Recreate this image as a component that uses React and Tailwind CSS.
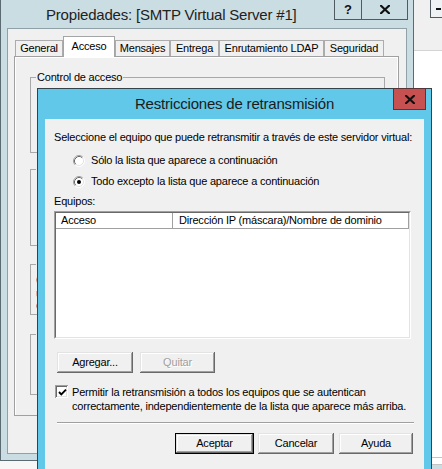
import React from "react";

function CloseGlyph() {
  return (
    <svg width="10" height="9" viewBox="0 0 10 9" className="block">
      <path d="M1 0.8 L9 8.2 M9 0.8 L1 8.2" stroke="#111" strokeWidth="2.2" strokeLinecap="square" />
    </svg>
  );
}

function Radio({ checked }) {
  return (
    <svg width="12" height="12" viewBox="0 0 12 12" className="block shrink-0">
      <circle cx="6" cy="6" r="5" fill="#fff" />
      <path d="M2.11 9.89 A5.5 5.5 0 0 1 9.89 2.11" fill="none" stroke="#a0a0a0" />
      <path d="M9.89 2.11 A5.5 5.5 0 0 1 2.11 9.89" fill="none" stroke="#ffffff" />
      <path d="M2.82 9.18 A4.5 4.5 0 0 1 9.18 2.82" fill="none" stroke="#696969" />
      <path d="M9.18 2.82 A4.5 4.5 0 0 1 2.82 9.18" fill="none" stroke="#e3e3e3" />
      {checked && <circle cx="6" cy="6" r="2" fill="#000" />}
    </svg>
  );
}

function Btn({ className, children, disabled }) {
  return (
    <div
      className={
        "h-[21px] bg-[#f0f0f0] shadow-[inset_-1px_-1px_0_#696969,inset_1px_1px_0_#e3e3e3,inset_-2px_-2px_0_#a0a0a0,inset_2px_2px_0_#ffffff] flex items-center justify-center text-[11px] tracking-[-0.2px] " +
        (disabled ? "text-[#a0a0a0] [text-shadow:1px_1px_0_#fff] " : "text-black ") +
        className
      }
    >
      {children}
    </div>
  );
}

function DefBtn({ className, children }) {
  return (
    <div className={"h-[21px] border border-black " + className}>
      <div className="h-full bg-[#f0f0f0] shadow-[inset_-1px_-1px_0_#696969,inset_1px_1px_0_#e3e3e3,inset_-2px_-2px_0_#a0a0a0,inset_2px_2px_0_#ffffff] flex items-center justify-center text-[11px] tracking-[-0.2px] text-black">
        {children}
      </div>
    </div>
  );
}

const tabs = [
  { label: "General", w: "w-[48px]" },
  { label: "Acceso", w: "w-[52px]", sel: true },
  { label: "Mensajes", w: "w-[55px]" },
  { label: "Entrega", w: "w-[49px]" },
  { label: "Enrutamiento LDAP", w: "w-[105px]" },
  { label: "Seguridad", w: "w-[60px]" },
];

export default function App() {
  return (
    <div className="relative w-[442px] h-[469px] overflow-hidden bg-[#f7f7f7] font-['Liberation_Sans',Arial,sans-serif] text-black">
      {/* window on the right, behind */}
      <div className="absolute left-[414px] top-0 w-[28px] h-[469px] flex flex-col">
        <div className="h-[51px] bg-[#f0f0f0] border-b border-[#d4d4d4] flex justify-end items-start">
          <div className="w-[12px] h-[18px] border-l border-b border-[#4f5b61] bg-[#eef2f4] flex items-center justify-end pr-[1px]">
            <div className="w-[5px] h-[2px] bg-[#111]" />
          </div>
        </div>
        <div className="flex-1 bg-white" />
        <div className="h-[8px] border-y border-[#c4c4c4] bg-white" />
        <div className="h-[4px] bg-[#cadde3]" />
      </div>

      {/* background properties window */}
      <div className="absolute left-0 top-0 w-[414px] h-[461px] flex flex-col bg-[#cadde3] border-x border-b border-[#5c6b71] px-[6px] pb-[6px]">
        <div className="h-[28px] flex justify-between">
          <div className="ml-[39px] mt-[5px] text-[15px] tracking-[-0.2px] leading-[20px] text-[#222]">
            Propiedades: [SMTP Virtual Server #1]
          </div>
          <div className="flex h-[20px] -mr-[1px] border-x border-b border-[#4f5b61]">
            <div className="w-[27px] h-full border-r border-[#4f5b61] flex items-center justify-center text-[13px] font-bold leading-none text-[#111]">
              ?
            </div>
            <div className="w-[45px] h-full flex items-center justify-center">
              <CloseGlyph />
            </div>
          </div>
        </div>
        <div className="flex-1 bg-[#f0f0f0] border border-[#8fa0a6] pt-[7px] pl-[6px] pr-[7px] flex flex-col">
          <div className="h-[20px] flex items-end pl-[1px] relative z-10">
            {tabs.map((t) =>
              t.sel ? (
                <div
                  key={t.label}
                  className={"h-[21px] -mb-[1px] bg-white border-t border-x border-[#a5a5a5] flex items-center justify-center text-[11px] tracking-[-0.2px] pb-[2px] " + t.w}
                >
                  {t.label}
                </div>
              ) : (
                <div
                  key={t.label}
                  className={"h-[16px] bg-[#f0f0f0] border-t border-x border-[#acacac] flex items-center justify-center text-[11px] tracking-[-0.2px] " + t.w}
                >
                  {t.label}
                </div>
              )
            )}
          </div>
          <div className="h-[360px] border border-[#a0a0a0] shadow-[inset_1px_1px_0_#ffffff,inset_-1px_0_0_#ffffff] bg-[#f0f0f0] flex flex-col pl-[15px] pr-[13px]">
            <fieldset className="mt-[14px] h-[82px] border border-[#a9a9a9] px-[5px]">
              <legend className="px-[1px] text-[11px] tracking-[-0.2px] leading-[13px]">Control de acceso</legend>
            </fieldset>
            <fieldset className="mt-[10px] h-[83px] border border-[#a9a9a9] px-[5px]">
              <legend className="px-[1px] text-[11px] leading-[13px]">Seguridad</legend>
            </fieldset>
            <fieldset className="mt-[12px] h-[57px] border border-[#a9a9a9] px-[5px]">
              <legend className="px-[1px] text-[11px] leading-[13px]">Control</legend>
              <div className="pt-[3px] text-[11px] leading-[12.5px] text-[#14307a]">
                <div>Conceder</div>
                <div>usuarios</div>
                <div>conexión</div>
              </div>
            </fieldset>
            <fieldset className="mt-[13px] h-[67px] border border-[#a9a9a9] px-[5px]">
              <legend className="px-[1px] text-[11px] leading-[13px]">Restricciones</legend>
            </fieldset>
          </div>
        </div>
      </div>

      {/* front dialog */}
      <div className="absolute left-[37px] top-[88px] w-[395px] h-[400px] flex flex-col bg-[#62c8ea] border border-[#34434a] px-[7px]">
        <div className="h-[30px] grid grid-cols-[1fr_auto_1fr] items-center">
          <div />
          <div className="text-[15px] tracking-[-0.2px] leading-[20px] text-[#1b1b1b]">Restricciones de retransmisión</div>
          <div className="flex justify-end self-start">
            <div className="w-[33px] h-[22px] -mt-[1px] -mr-[2px] bg-[#c75050] border border-[#5a3434] flex items-center justify-center">
              <CloseGlyph />
            </div>
          </div>
        </div>
        <div className="flex-1 bg-[#f0f0f0] flex flex-col text-[11px] tracking-[-0.2px] leading-[13px]">
          <div className="mt-[12px] ml-[9px]">Seleccione el equipo que puede retransmitir a través de este servidor virtual:</div>
          <div className="mt-[6px] ml-[28px] flex flex-col">
            <div className="h-[21px] flex items-center gap-[6px]">
              <Radio />
              <span>Sólo la lista que aparece a continuación</span>
            </div>
            <div className="h-[21px] flex items-center gap-[6px]">
              <Radio checked />
              <span>Todo excepto la lista que aparece a continuación</span>
            </div>
          </div>
          <div className="mt-[3px] ml-[9px]">Equipos:</div>
          <div className="mt-[3px] ml-[9px] w-[357px] h-[128px] border-t border-l border-[#a0a0a0] border-b-white border-r-white border-b border-r">
            <div className="w-full h-full bg-white border-t border-l border-t-[#696969] border-l-[#696969] border-b border-r border-b-[#e3e3e3] border-r-[#e3e3e3] flex flex-col">
              <div className="h-[16px] flex">
                <div className="w-[117px] h-full border-r border-b border-[#a0a0a0] shadow-[inset_-1px_0_0_#ffffff] flex items-center pl-[5px]">Acceso</div>
                <div className="w-[236px] h-full border-r border-b border-[#a0a0a0] flex items-center pl-[6px]">Dirección IP (máscara)/Nombre de dominio</div>
              </div>
            </div>
          </div>
          <div className="mt-[13px] ml-[12px] flex gap-[7px]">
            <Btn className="w-[76px]">Agregar...</Btn>
            <Btn className="w-[75px]" disabled>Quitar</Btn>
          </div>
          <div className="mt-[12px] ml-[10px] flex gap-[4px] leading-[14px]">
            <div className="w-[13px] h-[13px] shrink-0 bg-white shadow-[inset_1px_1px_0_#a0a0a0,inset_-1px_-1px_0_#ffffff,inset_2px_2px_0_#696969,inset_-2px_-2px_0_#e3e3e3] flex items-center justify-center">
              <svg width="9" height="9" viewBox="0 0 9 9" className="block ml-[1px] mt-[1px]">
                <path d="M1 4 L3.3 6.3 L8 1.6" fill="none" stroke="#000" strokeWidth="1.9" />
              </svg>
            </div>
            <div>
              <div>Permitir la retransmisión a todos los equipos que se autentican</div>
              <div>correctamente, independientemente de la lista que aparece más arriba.</div>
            </div>
          </div>
          <div className="mt-[9px] ml-[12px] w-[357px] h-[2px] border-t border-[#a0a0a0] border-b border-b-white" />
          <div className="mt-[9px] flex">
            <DefBtn className="ml-[130px] w-[79px]">Aceptar</DefBtn>
            <Btn className="ml-[4px] w-[76px]">Cancelar</Btn>
            <Btn className="ml-[5px] w-[74px]">Ayuda</Btn>
          </div>
        </div>
      </div>
    </div>
  );
}
